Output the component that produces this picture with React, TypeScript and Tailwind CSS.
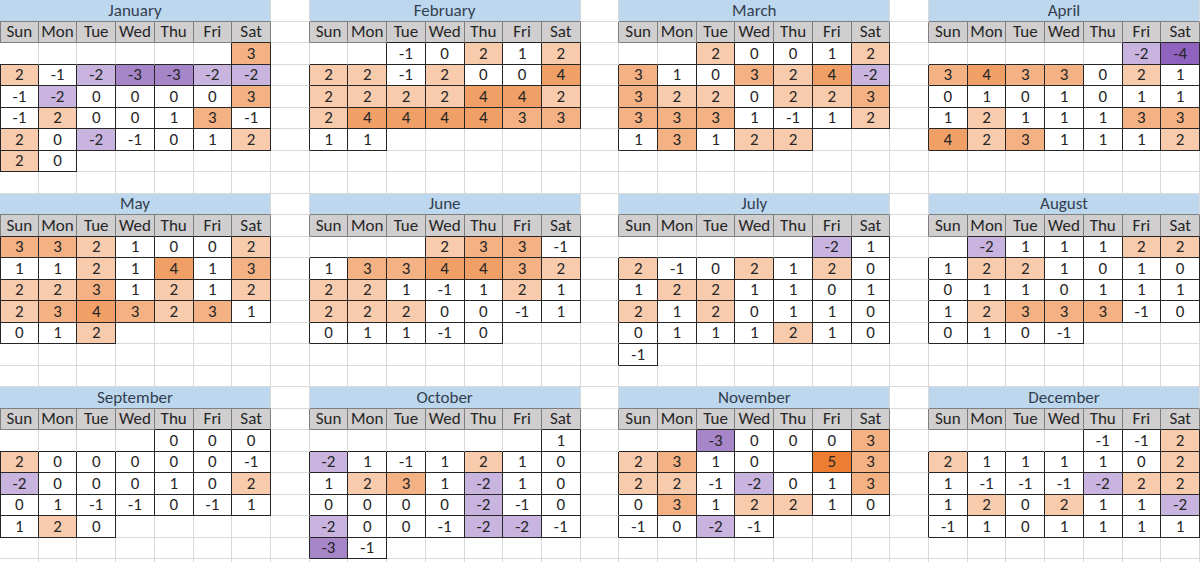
import { Fragment } from "react";

type Cell =
  | { kind: "blank" }
  | { kind: "title"; name: string }
  | { kind: "day"; label: string }
  | { kind: "data"; value: number | null };

interface Month {
  name: string;
  start: number; // weekday of the 1st, 0 = Sun
  values: (number | null)[];
}

const DAYS = ["Sun", "Mon", "Tue", "Wed", "Thu", "Fri", "Sat"];

const MONTHS: Month[] = [
  {
    name: "January",
    start: 6,
    values: [3, 2, -1, -2, -3, -3, -2, -2, -1, -2, 0, 0, 0, 0, 3, -1, 2, 0, 0, 1, 3, -1, 2, 0, -2, -1, 0, 1, 2, 2, 0],
  },
  {
    name: "February",
    start: 2,
    values: [-1, 0, 2, 1, 2, 2, 2, -1, 2, 0, 0, 4, 2, 2, 2, 2, 4, 4, 2, 2, 4, 4, 4, 4, 3, 3, 1, 1],
  },
  {
    name: "March",
    start: 2,
    values: [2, 0, 0, 1, 2, 3, 1, 0, 3, 2, 4, -2, 3, 2, 2, 0, 2, 2, 3, 3, 3, 3, 1, -1, 1, 2, 1, 3, 1, 2, 2],
  },
  {
    name: "April",
    start: 5,
    values: [-2, -4, 3, 4, 3, 3, 0, 2, 1, 0, 1, 0, 1, 0, 1, 1, 1, 2, 1, 1, 1, 3, 3, 4, 2, 3, 1, 1, 1, 2],
  },
  {
    name: "May",
    start: 0,
    values: [3, 3, 2, 1, 0, 0, 2, 1, 1, 2, 1, 4, 1, 3, 2, 2, 3, 1, 2, 1, 2, 2, 3, 4, 3, 2, 3, 1, 0, 1, 2],
  },
  {
    name: "June",
    start: 3,
    values: [2, 3, 3, -1, 1, 3, 3, 4, 4, 3, 2, 2, 2, 1, -1, 1, 2, 1, 2, 2, 2, 0, 0, -1, 1, 0, 1, 1, -1, 0],
  },
  {
    name: "July",
    start: 5,
    values: [-2, 1, 2, -1, 0, 2, 1, 2, 0, 1, 2, 2, 1, 1, 0, 1, 2, 1, 2, 0, 1, 1, 0, 0, 1, 1, 1, 2, 1, 0, -1],
  },
  {
    name: "August",
    start: 1,
    values: [-2, 1, 1, 1, 2, 2, 1, 2, 2, 1, 0, 1, 0, 0, 1, 1, 0, 1, 1, 1, 1, 2, 3, 3, 3, -1, 0, 0, 1, 0, -1],
  },
  {
    name: "September",
    start: 4,
    values: [0, 0, 0, 2, 0, 0, 0, 0, 0, -1, -2, 0, 0, 0, 1, 0, 2, 0, 1, -1, -1, 0, -1, 1, 1, 2, 0],
  },
  {
    name: "October",
    start: 6,
    values: [1, -2, 1, -1, 1, 2, 1, 0, 1, 2, 3, 1, -2, 1, 0, 0, 0, 0, 0, -2, -1, 0, -2, 0, 0, -1, -2, -2, -1, -3, -1],
  },
  {
    name: "November",
    start: 2,
    values: [-3, 0, 0, 0, 3, 2, 3, 1, 0, null, 5, 3, 2, 2, -1, -2, 0, 1, 3, 0, 3, 1, 2, 2, 1, 0, -1, 0, -2, -1],
  },
  {
    name: "December",
    start: 4,
    values: [-1, -1, 2, 2, 1, 1, 1, 1, 0, 2, 1, -1, -1, -1, -2, 2, 2, 1, 2, 0, 2, 1, 1, -2, -1, 1, 0, 1, 1, 1, 1],
  },
];

const ROWS = 27;
const COLS = 31;

const FILL: Record<number, string> = {
  2: "bg-[#f8cbad]",
  3: "bg-[#f4b183]",
  4: "bg-[#f0a066]",
  5: "bg-[#ed7d31]",
  [-2]: "bg-[#c8b4df]",
  [-3]: "bg-[#a685c9]",
  [-4]: "bg-[#8f62c0]",
};

// border colour by rank: 0 grid line, 2 header grey, 3 data black
const RIGHT: Record<number, string> = {
  0: "border-r-[#d9d9d9]",
  2: "border-r-[#7f7f7f]",
  3: "border-r-[#262626]",
};
const BOTTOM: Record<number, string> = {
  0: "border-b-[#d9d9d9]",
  2: "border-b-[#7f7f7f]",
  3: "border-b-[#262626]",
};
const LEFT: Record<number, string> = {
  0: "",
  2: "border-l border-l-[#7f7f7f]",
  3: "border-l border-l-[#262626]",
};

function buildSheet(): Cell[][] {
  const sheet: Cell[][] = Array.from({ length: ROWS }, () =>
    Array.from({ length: COLS }, () => ({ kind: "blank" }) as Cell)
  );
  MONTHS.forEach((m, i) => {
    const r0 = Math.floor(i / 4) * 9;
    const c0 = (i % 4) * 8;
    for (let d = 0; d < 7; d++) {
      sheet[r0][c0 + d] = { kind: "title", name: m.name };
      sheet[r0 + 1][c0 + d] = { kind: "day", label: DAYS[d] };
    }
    m.values.forEach((v, k) => {
      const pos = m.start + k;
      sheet[r0 + 2 + Math.floor(pos / 7)][c0 + (pos % 7)] = { kind: "data", value: v };
    });
  });
  return sheet;
}

const rank = (c?: Cell) => (!c ? 0 : c.kind === "data" ? 3 : c.kind === "day" ? 2 : 0);

export default function App() {
  const sheet = buildSheet();

  return (
    <div className="h-[562px] w-[1200px] overflow-hidden bg-white font-['Calibri','Lato',sans-serif] text-[17px] text-[#262626]">
      <div className="grid w-full grid-cols-[repeat(31,minmax(0,1fr))] auto-rows-[21.5px]">
        {sheet.map((row, r) =>
          row.map((cell, c) => {
            // merged title: render once over 7 columns
            if (cell.kind === "title") {
              if (c > 0 && row[c - 1].kind === "title") return null;
              return (
                <div
                  key={`${r}-${c}`}
                  className={`col-span-7 flex items-center justify-center border-r border-b bg-[#bdd7ee] leading-none text-[#333f50] ${RIGHT[rank(row[c + 7])]} ${BOTTOM[2]}`}
                >
                  {cell.name}
                </div>
              );
            }
            const right = Math.max(rank(cell), rank(row[c + 1]));
            const bottom = Math.max(rank(cell), rank(sheet[r + 1]?.[c]));
            const left = c === 0 ? LEFT[rank(cell)] : "";
            let fill = "";
            let text: string | number = "";
            if (cell.kind === "day") {
              fill = "bg-[#d0cece]";
              text = cell.label;
            } else if (cell.kind === "data") {
              fill = cell.value !== null && FILL[cell.value] ? FILL[cell.value] : "bg-white";
              text = cell.value === null ? "" : cell.value;
            }
            return (
              <Fragment key={`${r}-${c}`}>
                <div
                  className={`flex items-center justify-center overflow-hidden whitespace-nowrap border-r border-b leading-none ${RIGHT[right]} ${BOTTOM[bottom]} ${left} ${fill}`}
                >
                  {text}
                </div>
              </Fragment>
            );
          })
        )}
      </div>
    </div>
  );
}
